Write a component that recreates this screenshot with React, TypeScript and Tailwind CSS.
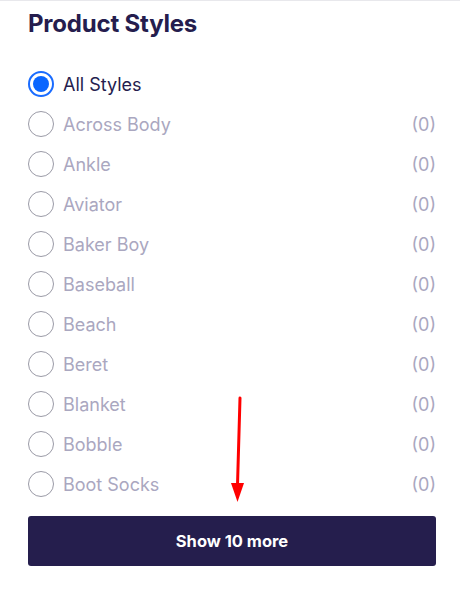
import React, { useState } from 'react';

const styles = [
  'Across Body',
  'Ankle',
  'Aviator',
  'Baker Boy',
  'Baseball',
  'Beach',
  'Beret',
  'Blanket',
  'Bobble',
  'Boot Socks',
];

const App: React.FC = () => {
  const [selected, setSelected] = useState('All Styles');

  return (
    <div className="relative w-[466px] h-[595px] bg-white" style={{ fontFamily: 'Inter, "Noto Sans", sans-serif' }}>
      <div className="w-[460px] border-t border-[#e8e8ec] pl-[28px] pr-[24px] pt-[8px]">
        <h2 className="text-[24px] leading-[30px] font-bold text-[#251d4e] tracking-[-0.2px]">Product Styles</h2>

        <ul className="mt-[25px]">
          <li className="h-[40px] flex items-center">
            <button onClick={() => setSelected('All Styles')} className="flex items-center">
              <span className="w-[26px] h-[26px] rounded-full border-2 border-[#1a6cff] flex items-center justify-center">
                {selected === 'All Styles' && <span className="w-[16px] h-[16px] rounded-full bg-[#0a66ff]" />}
              </span>
              <span className="ml-[9px] text-[18px] text-[#251d4e]">All Styles</span>
            </button>
          </li>
          {styles.map((s) => (
            <li key={s} className="h-[40px] flex items-center justify-between">
              <button onClick={() => setSelected(s)} className="flex items-center">
                <span className="w-[26px] h-[26px] rounded-full border border-[#9a9aa6] flex items-center justify-center">
                  {selected === s && <span className="w-[16px] h-[16px] rounded-full bg-[#0a66ff]" />}
                </span>
                <span className="ml-[9px] text-[18px] text-[#aaa7c0]">{s}</span>
              </button>
              <span className="text-[18px] text-[#aaa7c0]">(0)</span>
            </li>
          ))}
        </ul>

        <button className="mt-[12px] w-full h-[50px] rounded-[3px] bg-[#251e4d] text-white text-[16.5px] font-bold leading-[48px]">
          Show 10 more
        </button>
      </div>

      {/* annotation arrow */}
      <svg className="absolute left-[225px] top-[395px]" width="30" height="110" viewBox="0 0 30 110">
        <line x1="15" y1="3" x2="12.5" y2="90" stroke="#ff0000" strokeWidth="3" strokeLinecap="round" />
        <polygon points="6,88 19,88 12.5,107" fill="#ff0000" />
      </svg>
    </div>
  );
};

export default App;
